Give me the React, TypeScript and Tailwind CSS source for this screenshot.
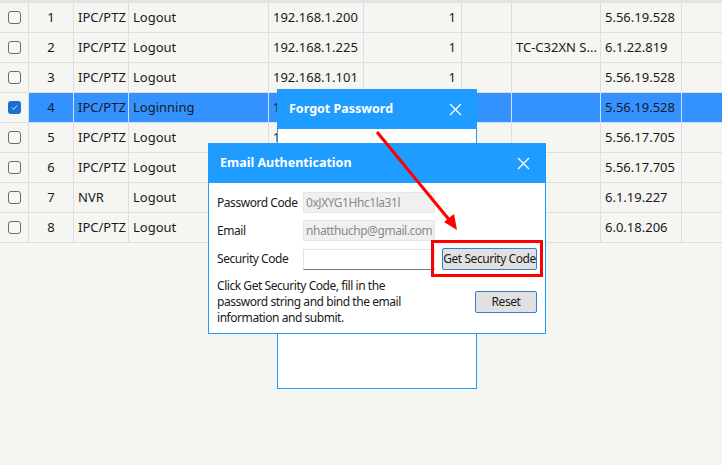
import React from "react";

const cols = [29, 45, 55, 140, 95, 98, 50, 89, 81, 40];

type Row = { n: number; type: string; status: string; ip: string; ch: string; model: string; ver: string; checked?: boolean };

const rows: Row[] = [
  { n: 1, type: "IPC/PTZ", status: "Logout", ip: "192.168.1.200", ch: "1", model: "", ver: "5.56.19.528" },
  { n: 2, type: "IPC/PTZ", status: "Logout", ip: "192.168.1.225", ch: "1", model: "TC-C32XN S...", ver: "6.1.22.819" },
  { n: 3, type: "IPC/PTZ", status: "Logout", ip: "192.168.1.101", ch: "1", model: "", ver: "5.56.19.528" },
  { n: 4, type: "IPC/PTZ", status: "Loginning", ip: "192.168.1.64", ch: "1", model: "", ver: "5.56.19.528", checked: true },
  { n: 5, type: "IPC/PTZ", status: "Logout", ip: "192.168.1.65", ch: "1", model: "", ver: "5.56.17.705" },
  { n: 6, type: "IPC/PTZ", status: "Logout", ip: "192.168.1.66", ch: "1", model: "", ver: "5.56.17.705" },
  { n: 7, type: "NVR", status: "Logout", ip: "192.168.1.67", ch: "1", model: "", ver: "6.1.19.227" },
  { n: 8, type: "IPC/PTZ", status: "Logout", ip: "192.168.1.68", ch: "1", model: "", ver: "6.0.18.206" },
];

function Checkbox({ checked }: { checked?: boolean }) {
  if (checked) {
    return (
      <div className="w-[13px] h-[13px] rounded-[3px] bg-[#1a6fd0] flex items-center justify-center">
        <svg width="9" height="9" viewBox="0 0 9 9">
          <path d="M1.8 4.6 L3.7 6.3 L7.2 2.6" stroke="#cfe3ff" strokeWidth="1" fill="none" />
        </svg>
      </div>
    );
  }
  return <div className="w-[13px] h-[13px] rounded-[3px] border border-[#6b6b6b] bg-[#f7f7f5]" />;
}

function XIcon({ size = 13 }: { size?: number }) {
  return (
    <svg width={size} height={size} viewBox="0 0 13 13">
      <path d="M1 1 L12 12 M12 1 L1 12" stroke="white" strokeWidth="1.3" fill="none" />
    </svg>
  );
}

export default function App() {
  return (
    <div
      className="relative w-[722px] h-[465px] overflow-hidden bg-[#f5f5f2] text-[13px] text-[#1a1a1a]"
      style={{ fontFamily: '"Noto Sans", "Open Sans", sans-serif' }}
    >
      <div className="h-[3px] bg-[#e4e4e4]" />
      <div className="flex flex-col">
        {rows.map((r) => {
          const sel = !!r.checked;
          const cell = `h-[30px] border-b border-r flex items-center ${sel ? "bg-[#3392ff] border-[#cfe0f5]" : "border-[#dedede]"}`;
          return (
            <div key={r.n} className="flex">
              <div className="h-[30px] border-b border-r border-[#dedede] flex items-center justify-center bg-[#f5f5f2]" style={{ width: cols[0] }}>
                <Checkbox checked={r.checked} />
              </div>
              <div className={`${cell} justify-center`} style={{ width: cols[1] }}>{r.n}</div>
              <div className={`${cell} pl-[4px]`} style={{ width: cols[2] }}>{r.type}</div>
              <div className={`${cell} pl-[4px]`} style={{ width: cols[3] }}>{r.status}</div>
              <div className={`${cell} pl-[4px]`} style={{ width: cols[4] }}>{r.ip}</div>
              <div className={`${cell} justify-end pr-[5px]`} style={{ width: cols[5] }}>{r.ch}</div>
              <div className={cell} style={{ width: cols[6] }} />
              <div className={`${cell} pl-[4px] whitespace-nowrap overflow-hidden`} style={{ width: cols[7] }}>{r.model}</div>
              <div className={`${cell} pl-[4px]`} style={{ width: cols[8] }}>{r.ver}</div>
              <div className={`${cell} border-r-0`} style={{ width: cols[9] }} />
            </div>
          );
        })}
      </div>

      {/* Forgot Password dialog */}
      <div className="absolute left-[277px] top-[89px] w-[200px] h-[300px] bg-white border border-[#1f9cff] flex flex-col">
        <div className="h-[40px] bg-[#1f9cff] flex items-center justify-between pl-[12px] pr-[15px] shrink-0 -mx-px -mt-px">
          <span className="text-white font-bold text-[12.5px]">Forgot Password</span>
          <XIcon />
        </div>
      </div>

      {/* Email Authentication dialog */}
      <div className="absolute left-[208px] top-[143px] w-[338px] h-[191px] bg-white border border-[#1f9cff] flex flex-col">
        <div className="h-[40px] bg-[#1f9cff] flex items-center justify-between pl-[12px] pr-[16px] shrink-0 -mx-px -mt-px">
          <span className="text-white font-bold text-[12.5px]">Email Authentication</span>
          <XIcon />
        </div>
        <div className="pl-[8px] pt-[9px] flex flex-col text-[12px] tracking-[-0.45px]">
          <div className="flex items-center h-[21px]">
            <span className="w-[86px] shrink-0 whitespace-nowrap">Password Code</span>
            <div className="w-[132px] h-[21px] bg-[#f0f0f0] border border-[#e6e6e6] flex items-center pl-[2px] text-[#8a8a8a] whitespace-nowrap overflow-hidden">0xJXYG1Hhc1la31l</div>
          </div>
          <div className="flex items-center h-[21px] mt-[7px]">
            <span className="w-[86px] shrink-0 whitespace-nowrap">Email</span>
            <div className="w-[132px] h-[21px] bg-[#f0f0f0] border border-[#e6e6e6] flex items-center pl-[2px] text-[#8a8a8a] whitespace-nowrap overflow-hidden">nhatthuchp@gmail.com</div>
          </div>
          <div className="flex items-center h-[22px] mt-[7px]">
            <span className="w-[86px] shrink-0 whitespace-nowrap">Security Code</span>
            <div className="w-[132px] h-[21px] bg-white border border-[#e3e3e3] border-b-[#7a7a7a] shrink-0" />
            <div className="ml-[7px] w-[95px] h-[22px] bg-[#e1e1e1] border border-[#2e7fd8] rounded-[2px] flex items-center justify-center text-[12px] whitespace-nowrap shrink-0">Get Security Code</div>
          </div>
          <div className="flex mt-[8px]">
            <div className="leading-[16px] w-[240px] shrink-0 whitespace-nowrap">
              Click Get Security Code, fill in the<br />password string and bind the email<br />information and submit.
            </div>
            <div className="ml-[18px] mt-[13px] w-[62px] h-[22px] bg-[#e1e1e1] border border-[#2e7fd8] rounded-[2px] flex items-center justify-center shrink-0">Reset</div>
          </div>
        </div>
      </div>

      {/* Red highlight box */}
      <div className="absolute left-[431px] top-[240px] w-[112px] h-[37px] border-[3px] border-[#ff0000]" />

      {/* Red arrow */}
      <svg className="absolute left-0 top-0" width="722" height="465" viewBox="0 0 722 465">
        <line x1="377" y1="132" x2="451" y2="222" stroke="#ff0000" strokeWidth="3" />
        <path d="M457 230 L444 222 L454 214 Z" fill="#ff0000" />
      </svg>
    </div>
  );
}
